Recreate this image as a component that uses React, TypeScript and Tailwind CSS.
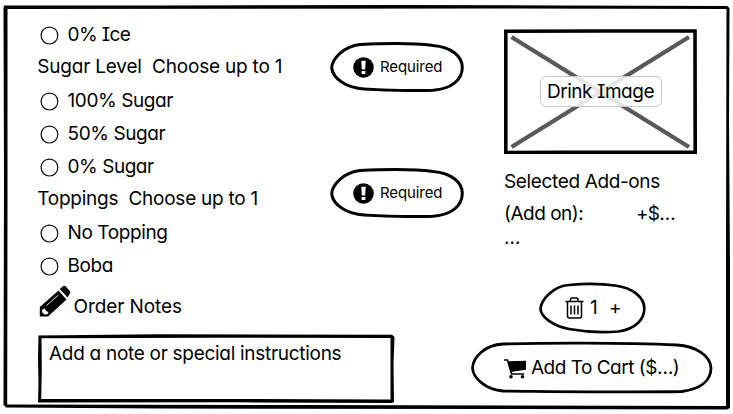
import type { ReactNode } from "react";

function Radio() {
  return (
    <svg className="h-[19px] w-[19px] shrink-0" viewBox="0 0 19 19" fill="none" stroke="#111" strokeWidth="1.25">
      <path d="M9.3 1C4.7 1 1.2 4.6 1.1 9.3 1 14.2 4.8 17.9 9.4 18c4.8 0 8.3-3.7 8.4-8.5C17.9 4.5 14.300 1 9.300 1Z" />
    </svg>
  );
}

function Option({ label, tracking }: { label: string; tracking: string }) {
  return (
    <label className="flex h-[33px] items-center pl-[2px]">
      <span className="mt-[2px] flex">
        <Radio />
      </span>
      <span className={`ml-[8.5px] ${tracking}`}>{label}</span>
    </label>
  );
}

function Required() {
  return (
    <div className="relative flex h-[50px] w-[134px] shrink-0 items-center pl-[23px]">
      <svg className="absolute inset-0" width="134" height="50" viewBox="0 0 134 50" fill="none" stroke="#000" strokeWidth="3">
        <path d="M30 2.500C60 1 88 1.500 103 3.500C121 5 132.300 14 132.300 25.500C132.300 38 121 47 103 48.200C80 49 55 48.200 34 47C17 46 3 37 1.700 26C2 17 14 4 30 2.500Z" />
      </svg>
      <svg width="21" height="21" viewBox="0 0 21 21">
        <circle cx="10.500" cy="10.500" r="10.300" fill="#000" />
        <path d="M8.300 3.800h4.400l-.5 8.700H8.800z" fill="#fff" />
        <path d="M8.600 14h3.800v3H8.600z" fill="#fff" />
      </svg>
      <span className="mb-px ml-[6px] text-[15px] tracking-[-0.1px]">Required</span>
    </div>
  );
}

function Heading({ title, tracking, children }: { title: string; tracking: string; children: ReactNode }) {
  return (
    <div className="flex h-[33px] items-center justify-between">
      <h2 className={`mb-[2px] -ml-[0.7px] whitespace-pre ${tracking}`}>{title}</h2>
      {children}
    </div>
  );
}

export default function App() {
  return (
    <main className="relative flex h-[414px] w-[733px] overflow-hidden bg-white pt-[18px] pl-[38px] font-['Inter',sans-serif] text-[19px] leading-[24px] text-black [font-feature-settings:'cv11','cv08']">
      <svg className="absolute inset-0" width="733" height="414" viewBox="0 0 733 414" fill="#000">
        <path d="M4 5.500L160 5.500L400 5L560 5.500L727 6L729.500 8L729 120L730 270L730 408L727 409.500L500 409L160 408.500L6 407.500L3.500 405L4 180L3.500 8ZM7.500 9L7.500 200L7.200 404.500L300 405L726 406L726 260L726.500 9L500 8.500Z" fillRule="evenodd" />
      </svg>

      <section className="flex w-[426px] flex-col">
        <Option label="0% Ice" tracking="tracking-[-0.6px]" />
        <Heading title="Sugar Level  Choose up to 1" tracking="tracking-[-0.2px]">
          <div className="mb-[1px]"><Required /></div>
        </Heading>
        <Option label="100% Sugar" tracking="tracking-[-0.4px]" />
        <Option label="50% Sugar" tracking="tracking-[-0.4px]" />
        <Option label="0% Sugar" tracking="tracking-[-0.45px]" />
        <Heading title="Toppings  Choose up to 1" tracking="tracking-[-0.25px]">
          <div className="mb-[13px]"><Required /></div>
        </Heading>
        <Option label="No Topping" tracking="tracking-[-0.4px]" />
        <Option label="Boba" tracking="tracking-[-0.4px]" />

        <div className="mt-[2px] flex h-[36px] items-center">
          <svg className="ml-px shrink-0" width="33" height="34" viewBox="0 0 33 34">
            <path d="M.8 22L19.500 5.500L27.500 14.500L9 31.500L.8 31.500Z" fill="#000" />
            <path d="M20.800 4L24.300 1Q25.300.3 26.300 1.100L31 6.300Q31.800 7.500 30.800 8.500L28.600 12.500Z" fill="#000" />
            <path d="M7.500 20.500L19.500 10" stroke="#fff" strokeWidth=".9" />
            <path d="M3.500 24.500L6 23.500L7 26L9.500 27L8.500 29.200L5.500 29.500L3 27Z" fill="#fff" />
          </svg>
          <span className="mt-[9px] ml-[1.500px] tracking-[-0.1px]">Order Notes</span>
        </div>

        <div className="relative -ml-px mt-[14px] h-[70px] w-[358px] shrink-0 pt-[8px] pl-[12px]">
          <svg className="absolute inset-0" width="358" height="70" viewBox="0 0 358 70">
            <path d="M1.500 1.500L120 .3L355 .8L357.500 3L356.500 30L357 68L355 69L200 68.300L1 68.500L1.500 50L1 25ZM4.500 4.200L4.800 35L4.200 65L180 65L353.500 65.500L353.500 4L180 3.800Z" fill="#000" fillRule="evenodd" />
          </svg>
          <span className="tracking-[-0.29px]">Add a note or special instructions</span>
        </div>
      </section>

      <aside className="ml-[7px] flex w-[242px] flex-col">
        <figure className="relative ml-[33px] mt-[11px] flex h-[125px] w-[193px] shrink-0 items-center justify-center">
          <svg className="absolute inset-0" width="193" height="125" viewBox="0 0 193 125" fill="none">
            <path d="M7.500 8L185 118M185 8L7.500 118" stroke="#59595b" strokeWidth="4.300" />
            <path d="M1.800 2.300L100 2L191 2L191.200 123.200L60 123.400L1.800 123.500Z" stroke="#000" strokeWidth="3.600" />
          </svg>
          <figcaption className="relative flex h-[31px] w-[122px] items-center justify-center rounded-[6px] border border-[#c8c8c8] bg-white/85">
            <span className="whitespace-nowrap tracking-[-0.45px]">Drink Image</span>
          </figcaption>
        </figure>
        <h3 className="mt-[16px] ml-[33px] tracking-[-0.36px]">Selected Add-ons</h3>
        <div className="mt-[8px] ml-[33px] flex">
          <span className="w-[132px] tracking-[-0.5px]">(Add on):</span>
          <span className="tracking-[-0.7px]">+$…</span>
        </div>
        <span className="ml-[33px] tracking-[-0.8px]">…</span>

        <div className="relative mt-[32px] ml-[68px] flex h-[52px] w-[107px] shrink-0 items-center">
          <svg className="absolute inset-0" width="107" height="52" viewBox="0 0 107 52" fill="none" stroke="#000" strokeWidth="2.700">
            <path d="M30 3C45 1.500 62 1.500 76 3.500C94 6 105 15 105.300 26C105.500 37 97 47 79 49.500C60 51 44 49.500 30 47C14 44 2 35 1.500 27C2 18 14 4 30 3Z" />
          </svg>
          <svg className="ml-[26px] shrink-0" width="19" height="22" viewBox="0 0 19 22" fill="none" stroke="#000" strokeWidth="1.500">
            <path d="M.5 4.500H18.500M5.500 4V2.500Q5.500 1 7 1H11.500Q13 1 13 2.500V4M2.500 5V19Q2.500 21 4.500 21H14.500Q16.500 21 16.500 19V5M6 8.500V17.500M9.500 8.500V17.500M13 8.500V17.500" />
          </svg>
          <span className="ml-[6px] w-[19px]">1</span>
          <span>+</span>
        </div>

        <div className="relative mt-[7px] flex h-[53px] w-[242px] shrink-0 items-center">
          <svg className="absolute inset-0" width="242" height="53" viewBox="0 0 242 53" fill="none" stroke="#000" strokeWidth="2.800">
            <path d="M32 3C70 2 150 1.500 206 4C225 5 239.500 15 240 27C240 40 229 48 211 50.500C160 51.500 90 50.500 32 50C15 49 2 37 1.500 27C2 16 14 4 32 3Z" />
          </svg>
          <svg className="mt-[3px] ml-[33px] shrink-0" width="23" height="20" viewBox="0 0 23 20">
            <path d="M0 1H3.500L7.500 15H20" fill="none" stroke="#000" strokeWidth="1.600" />
            <path d="M4.200 2.200L22 1.800V10.800L6.500 13Z" fill="#000" />
            <circle cx="7" cy="17.800" r="1.800" />
            <circle cx="18.500" cy="17.800" r="1.800" />
          </svg>
          <span className="ml-[4px] tracking-[-0.5px] whitespace-nowrap">Add To Cart ($…)</span>
        </div>
      </aside>
    </main>
  );
}
